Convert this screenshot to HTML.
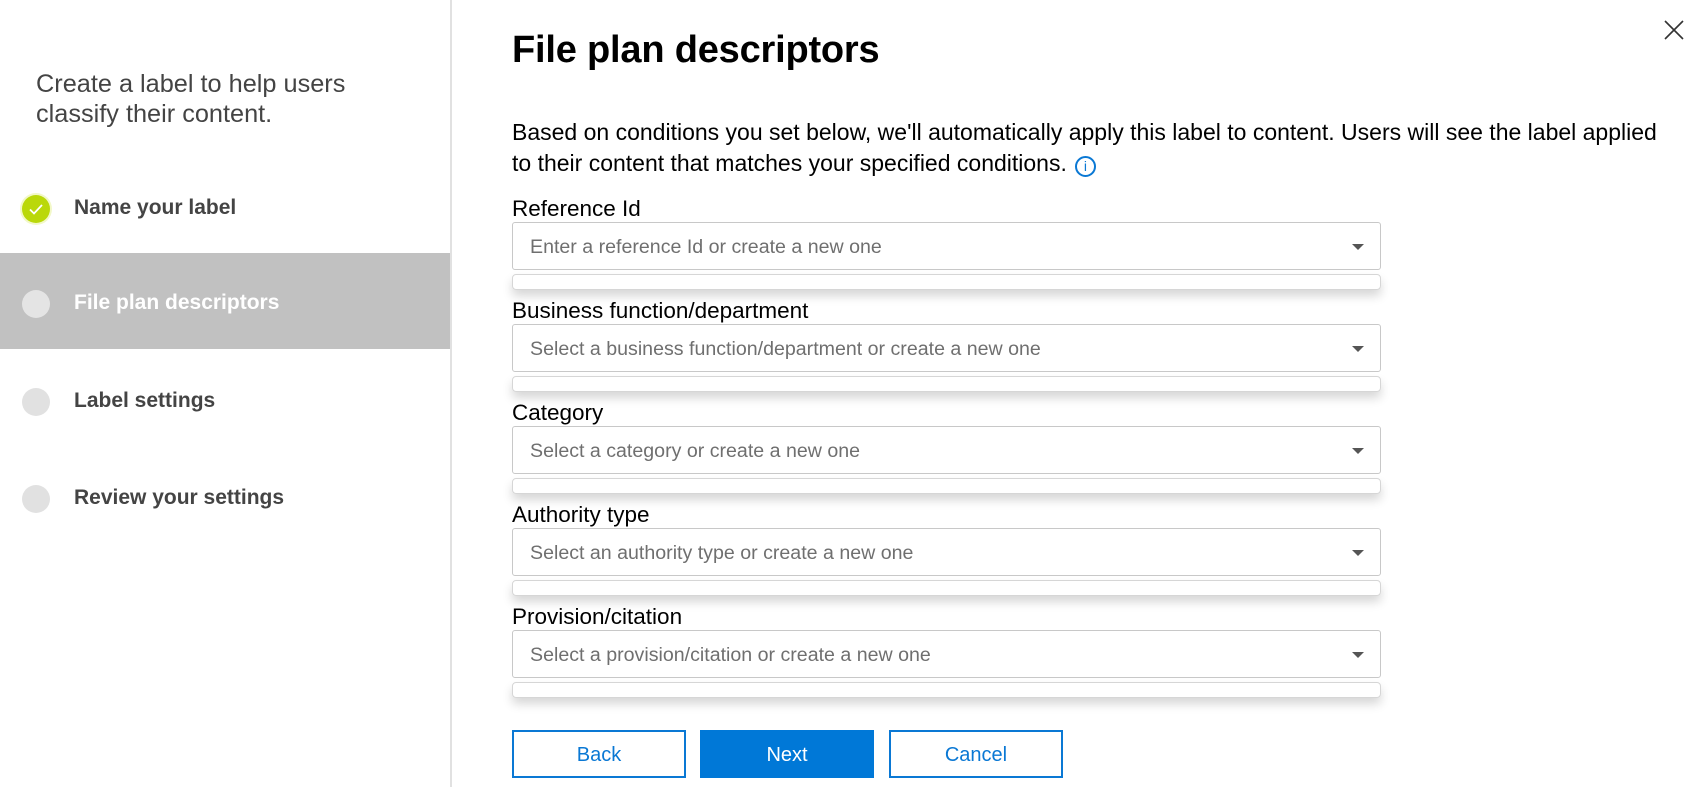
<!DOCTYPE html>
<html><head><meta charset="utf-8"><style>
*{margin:0;padding:0;box-sizing:border-box}
body{width:1701px;height:787px;background:#fff;font-family:"Liberation Sans",sans-serif;position:relative;overflow:hidden;color:#000}
.side{position:absolute;left:0;top:0;width:452px;height:787px;border-right:2px solid #e1e1e1}
.intro{position:absolute;left:36px;top:69px;font-size:25.3px;line-height:30px;color:#444}
.step{position:absolute;left:0;width:450px;height:96px}
.step .c{position:absolute;left:22px;top:37px;width:28px;height:28px;border-radius:50%;background:#e1e1e1}
.step .t{position:absolute;left:74px;top:38px;font-size:21px;font-weight:bold;color:#444;white-space:nowrap}
.active{background:#c1c1c1}
.active .t{color:#fff}
.active .c{background:#e4e4e4}
h1{position:absolute;left:512px;top:29px;font-size:38px;font-weight:bold;letter-spacing:-0.2px}
.p{position:absolute;left:512px;top:117px;font-size:23px;line-height:31px;white-space:nowrap}
.info{display:inline-block;width:21px;height:21px;border:2px solid #0a78d4;border-radius:50%;color:#0a78d4;font-size:14px;line-height:17px;text-align:center;vertical-align:0px;margin-left:8px;letter-spacing:0}
.lab{position:absolute;left:512px;font-size:22.5px;white-space:nowrap}
.box{position:absolute;left:512px;width:869px;height:48px;border:1px solid #c8c8c8;border-radius:3px;font-size:19.6px;color:#6f6f6f;padding:13px 0 0 17px;white-space:nowrap}
.box:after{content:"";position:absolute;right:16px;top:21px;border-left:6px solid transparent;border-right:6px solid transparent;border-top:6px solid #555}
.sm{position:absolute;left:512px;width:869px;height:16px;border:1px solid #d6d6d6;border-radius:4px;box-shadow:0 6px 10px rgba(0,0,0,.16)}
.btn{position:absolute;top:730px;width:174px;height:48px;border:2px solid #0a78d4;color:#0a78d4;font-size:20px;text-align:center;line-height:46px}
.next{background:#0078d7;color:#fff;border-color:#0078d7}
</style></head><body>
<div class="side">
<div class="intro">Create a label to help users<br>classify their content.</div>
<div class="step" style="top:158px"><div class="c" style="background:#bad80a;box-shadow:0 0 0 2px #f2f8c8"><svg width="28" height="28" viewBox="0 0 28 28"><path d="M8 14.5l4 4 8-8.5" fill="none" stroke="#fff" stroke-width="1.8"/></svg></div><div class="t">Name your label</div></div>
<div class="step active" style="top:253px"><div class="c"></div><div class="t">File plan descriptors</div></div>
<div class="step" style="top:351px"><div class="c"></div><div class="t">Label settings</div></div>
<div class="step" style="top:448px"><div class="c"></div><div class="t">Review your settings</div></div>
</div>
<svg style="position:absolute;left:1664px;top:20px" width="20" height="20" viewBox="0 0 20 20"><path d="M1 1L19 19M19 1L1 19" stroke="#333" stroke-width="1.6"/></svg>
<h1>File plan descriptors</h1>
<div class="p">Based on conditions you set below, we'll automatically apply this label to content. Users will see the label applied<br>to their content that matches your specified conditions.<span class="info">i</span></div>

<div class="lab" style="top:196px">Reference Id</div>
<div class="box" style="top:222px">Enter a reference Id or create a new one</div>
<div class="sm" style="top:274px"></div>

<div class="lab" style="top:298px">Business function/department</div>
<div class="box" style="top:324px">Select a business function/department or create a new one</div>
<div class="sm" style="top:376px"></div>

<div class="lab" style="top:400px">Category</div>
<div class="box" style="top:426px">Select a category or create a new one</div>
<div class="sm" style="top:478px"></div>

<div class="lab" style="top:502px">Authority type</div>
<div class="box" style="top:528px">Select an authority type or create a new one</div>
<div class="sm" style="top:580px"></div>

<div class="lab" style="top:604px">Provision/citation</div>
<div class="box" style="top:630px">Select a provision/citation or create a new one</div>
<div class="sm" style="top:682px"></div>

<div class="btn" style="left:512px">Back</div>
<div class="btn next" style="left:700px">Next</div>
<div class="btn" style="left:889px">Cancel</div>
</body></html>
